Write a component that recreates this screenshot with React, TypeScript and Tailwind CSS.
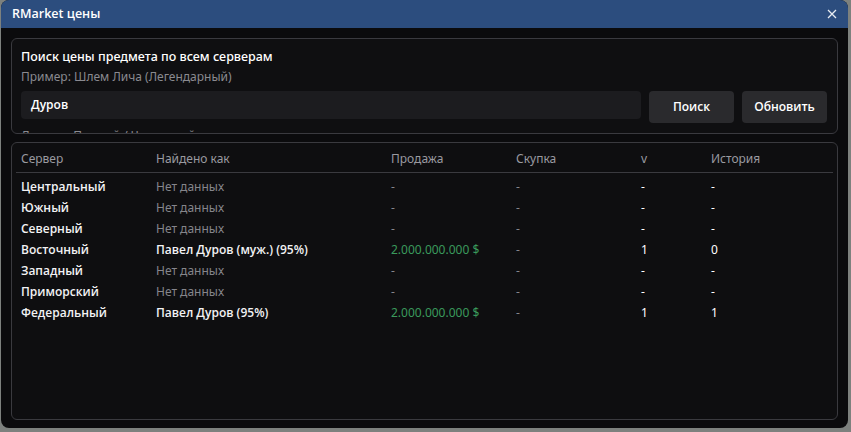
import React from "react";

const rows = [
  { s: "Центральный", f: null, p: null, b: "-", v: "-", h: "-" },
  { s: "Южный", f: null, p: null, b: "-", v: "-", h: "-" },
  { s: "Северный", f: null, p: null, b: "-", v: "-", h: "-" },
  { s: "Восточный", f: "Павел Дуров (муж.) (95%)", p: "2.000.000.000 $", b: "-", v: "1", h: "0" },
  { s: "Западный", f: null, p: null, b: "-", v: "-", h: "-" },
  { s: "Приморский", f: null, p: null, b: "-", v: "-", h: "-" },
  { s: "Федеральный", f: "Павел Дуров (95%)", p: "2.000.000.000 $", b: "-", v: "1", h: "1" },
];

const cols = "grid grid-cols-[135px_235px_125px_125px_70px_1fr]";
const semi = "text-[#f2f2f4] font-semibold font-['Open_Sans',sans-serif] text-[12px]";

export default function App() {
  return (
    <div
      className="w-[851px] h-[432px] bg-[#7d817e] overflow-hidden"
      style={{ fontFamily: '"Noto Sans", "Open Sans", sans-serif' }}
    >
      <div className="ml-[1px] w-[847px] h-[428px] rounded-[8px] overflow-hidden bg-[#0b0b0d] flex flex-col">
        <div className="h-[28px] bg-[#2c4d7e] flex items-center justify-between pl-[11px] pr-[10px] shrink-0">
          <span className={`text-white font-semibold font-['Open_Sans',sans-serif] text-[12.5px]`}>RMarket цены</span>
          <svg width="10" height="10" viewBox="0 0 10 10" className="mr-[1px]">
            <path d="M1 1L9 9M9 1L1 9" stroke="#e8ecf2" strokeWidth="1.3" />
          </svg>
        </div>
        <div className="flex-1 flex flex-col px-[10px] pt-[10px] pb-[8px] gap-[8px]">
          <div className="h-[96px] shrink-0 border border-[#3a3a3f] rounded-[6px] bg-[#0f0f11] overflow-hidden px-[9px] pt-[9px]">
            <div className="text-white text-[12.5px] font-medium leading-[18px]">
              Поиск цены предмета по всем серверам
            </div>
            <div className="text-[#8a8a90] text-[12px] leading-[18px] mt-[2px]">
              Пример: Шлем Лича (Легендарный)
            </div>
            <div className="flex gap-[8px] mt-[5px] items-start">
              <div className={`w-[620px] h-[28px] rounded-[4px] bg-[#1c1c1f] flex items-center pl-[10px] text-white font-semibold font-['Open_Sans',sans-serif] text-[12px]`}>
                Дуров
              </div>
              <div className="w-[85px] h-[32px] rounded-[4px] bg-[#2a2a2d] flex items-center justify-center text-white text-[12px] font-semibold font-['Open_Sans',sans-serif]">
                Поиск
              </div>
              <div className="w-[85px] h-[32px] rounded-[4px] bg-[#2a2a2d] flex items-center justify-center text-white text-[12px] font-semibold font-['Open_Sans',sans-serif]">
                Обновить
              </div>
            </div>
            <div className="text-[#8a8a90] text-[12px] leading-[18px] mt-[4px]">
              Данные: Полный / Частичный по серверам
            </div>
          </div>
          <div className="flex-1 border border-[#3a3a3f] rounded-[6px] bg-[#0e0e10] px-[4px] pt-[8px]">
            <div className={`${cols} text-[#9a9aa0] text-[12px] leading-[16px] px-[5px] pb-[5px] border-b border-[#3a3a3f]`}>
              <div>Сервер</div>
              <div>Найдено как</div>
              <div>Продажа</div>
              <div>Скупка</div>
              <div>v</div>
              <div>История</div>
            </div>
            <div className="pt-[3px]">
              {rows.map((r) => (
                <div key={r.s} className={`${cols} px-[5px] h-[21px] items-center text-[12px]`}>
                  <div className={semi}>{r.s}</div>
                  {r.f ? (
                    <div className={semi}>{r.f}</div>
                  ) : (
                    <div className="text-[#85858b]">Нет данных</div>
                  )}
                  {r.p ? (
                    <div className="text-[#3a9a5c]">{r.p}</div>
                  ) : (
                    <div className="text-[#85858b]">-</div>
                  )}
                  <div className="text-[#85858b]">{r.b}</div>
                  <div className="text-white">{r.v}</div>
                  <div className="text-white">{r.h}</div>
                </div>
              ))}
            </div>
          </div>
        </div>
      </div>
    </div>
  );
}
